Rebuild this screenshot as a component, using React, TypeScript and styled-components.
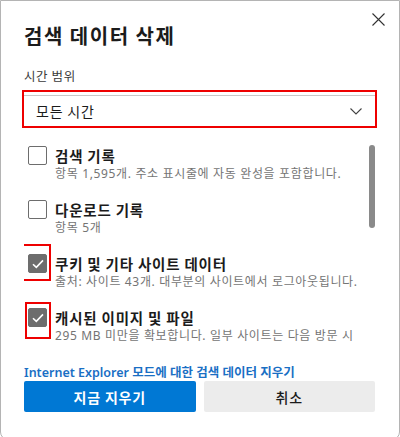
import React from 'react';
import styled, { createGlobalStyle } from 'styled-components';

const GlobalStyle = createGlobalStyle`
    html, body {
        margin: 0;
        padding: 0;
        background: #ffffff;
    }
    body {
        font-family: 'Noto Sans', 'Noto Sans CJK KR', sans-serif;
        color: #1b1b1b;
    }
`;

const Dialog = styled.div`
    position: relative;
    box-sizing: border-box;
    width: 400px;
    height: 440px;
    border: 1px solid #b4b4b4;
    border-radius: 0 0 8px 8px;
    background: #ffffff;
    padding: 19px 23px 0 23px;
    overflow: hidden;
`;

const CloseButton = styled.button`
    position: absolute;
    top: 11px;
    right: 14px;
    width: 14px;
    height: 14px;
    padding: 0;
    border: none;
    background: transparent;
    display: flex;
    align-items: center;
    justify-content: center;
`;

const Title = styled.h1`
    margin: 0;
    font-family: 'Noto Sans CJK KR', sans-serif;
    font-size: 20px;
    font-weight: 700;
    line-height: 32px;
    letter-spacing: 1.5px;
    color: #1b1b1b;
`;

const Label = styled.div`
    margin-top: 15px;
    font-family: 'Noto Sans CJK KR', sans-serif;
    font-size: 12.5px;
    line-height: 18px;
    letter-spacing: 0.6px;
    color: #3a3a3a;
`;

const Highlight = styled.div`
    position: relative;
    box-sizing: border-box;
    border: 2px solid #ee0000;
`;

const SelectHighlight = styled(Highlight)`
    margin: 5px -1px 0 -2px;
    padding-top: 3px;
`;

const Select = styled.div`
    box-sizing: border-box;
    height: 31px;
    border-top: 1px solid #c8c8c8;
    display: flex;
    align-items: center;
    justify-content: space-between;
    padding: 0 13px 0 12px;
    font-family: 'Noto Sans CJK KR', sans-serif;
    font-size: 14px;
    letter-spacing: 0.8px;
    color: #1b1b1b;
`;

const List = styled.div`
    position: relative;
    margin-top: 10px;
    height: 204px;
    overflow: hidden;
    padding: 8px 12px 0 4px;
    box-sizing: border-box;
`;

const Thumb = styled.div`
    position: absolute;
    top: 7px;
    right: 1px;
    width: 6px;
    height: 83px;
    border-radius: 3px;
    background: #8a8a8a;
`;

const Item = styled.div`
    display: flex;
    gap: 8px;
    margin-bottom: 19px;
`;

const BoxWrap = styled.div`
    position: relative;
    flex-shrink: 0;
    width: 19px;
    height: 19px;
`;

const Box = styled.div<{ $checked?: boolean }>`
    box-sizing: border-box;
    width: 19px;
    height: 19px;
    border-radius: 2px;
    border: 1px solid #6d6d6d;
    background: ${p => (p.$checked ? '#6d6d6d' : '#ffffff')};
    display: flex;
    align-items: center;
    justify-content: center;
`;

const Mark = styled(Highlight)<{ $left: number; $top: number; $w: number; $h: number }>`
    position: absolute;
    left: ${p => p.$left}px;
    top: ${p => p.$top}px;
    width: ${p => p.$w}px;
    height: ${p => p.$h}px;
`;

const ItemText = styled.div`
    display: flex;
    flex-direction: column;
    min-width: 0;
`;

const ItemTitle = styled.div`
    font-family: 'Noto Sans CJK KR', sans-serif;
    font-size: 14.5px;
    font-weight: 700;
    line-height: 19px;
    letter-spacing: 0.8px;
    color: #1b1b1b;
`;

const ItemSub = styled.div`
    margin-top: 2px;
    font-family: 'Noto Sans', 'Noto Sans CJK KR', sans-serif;
    font-size: 12px;
    line-height: 14px;
    letter-spacing: 0.65px;
    color: #747474;
`;

const Link = styled.a`
    display: block;
    margin-top: 23px;
    font-family: 'Noto Sans', 'Noto Sans CJK KR', sans-serif;
    font-size: 12.5px;
    font-weight: 600;
    line-height: 16px;
    color: #1a6fc4;
    text-decoration: none;
    white-space: nowrap;
`;

const Buttons = styled.div`
    display: grid;
    grid-template-columns: 1fr 1fr;
    gap: 8px;
    padding-right: 1px;
`;

const Button = styled.button<{ $primary?: boolean }>`
    height: 31px;
    border: none;
    border-radius: 2px;
    font-family: 'Noto Sans CJK KR', sans-serif;
    font-size: 14px;
    font-weight: ${p => (p.$primary ? 700 : 500)};
    letter-spacing: 0.8px;
    color: ${p => (p.$primary ? '#ffffff' : '#1b1b1b')};
    background: ${p => (p.$primary ? '#0078d4' : '#ececec')};
`;

type Entry = {
    title: string;
    sub: string;
    checked?: boolean;
    mark?: { left: number; top: number; w: number; h: number };
};

const entries: Entry[] = [
    { title: '검색 기록', sub: '항목 1,595개. 주소 표시줄에 자동 완성을 포함합니다.' },
    { title: '다운로드 기록', sub: '항목 5개' },
    {
        title: '쿠키 및 기타 사이트 데이터',
        sub: '출처: 사이트 43개. 대부분의 사이트에서 로그아웃됩니다.',
        checked: true,
        mark: { left: -6, top: -10, w: 29, h: 37 },
    },
    {
        title: '캐시된 이미지 및 파일',
        sub: '295 MB 미만을 확보합니다. 일부 사이트는 다음 방문 시 로드 속도가 느려질 수 있습니다.',
        checked: true,
        mark: { left: -3, top: -6, w: 26, h: 37 },
    },
];

const Check = () => (
    <svg width='12' height='10' viewBox='0 0 12 10'>
        <path d='M1 5.2 L4.3 8.4 L11 1.4' fill='none' stroke='#ffffff' strokeWidth='1.6' />
    </svg>
);

export default function App() {
    return (
        <>
            <GlobalStyle />
            <Dialog>
                <CloseButton aria-label='닫기'>
                    <svg width='13' height='13' viewBox='0 0 13 13'>
                        <path d='M0.5 0.5 L12.5 12.5 M12.5 0.5 L0.5 12.5' stroke='#333' strokeWidth='1.1' />
                    </svg>
                </CloseButton>
                <Title>검색 데이터 삭제</Title>
                <Label>시간 범위</Label>
                <SelectHighlight>
                    <Select>
                        <span>모든 시간</span>
                        <svg width='12' height='7' viewBox='0 0 12 7'>
                            <path d='M0.5 0.5 L6 6 L11.5 0.5' fill='none' stroke='#444' strokeWidth='1.1' />
                        </svg>
                    </Select>
                </SelectHighlight>
                <List>
                    {entries.map(e => (
                        <Item key={e.title}>
                            <BoxWrap>
                                <Box $checked={e.checked}>{e.checked && <Check />}</Box>
                                {e.mark && (
                                    <Mark $left={e.mark.left} $top={e.mark.top} $w={e.mark.w} $h={e.mark.h} />
                                )}
                            </BoxWrap>
                            <ItemText>
                                <ItemTitle>{e.title}</ItemTitle>
                                <ItemSub>{e.sub}</ItemSub>
                            </ItemText>
                        </Item>
                    ))}
                    <Thumb />
                </List>
                <Link href='#'>Internet Explorer 모드에 대한 검색 데이터 지우기</Link>
                <Buttons>
                    <Button $primary>지금 지우기</Button>
                    <Button>취소</Button>
                </Buttons>
            </Dialog>
        </>
    );
}
